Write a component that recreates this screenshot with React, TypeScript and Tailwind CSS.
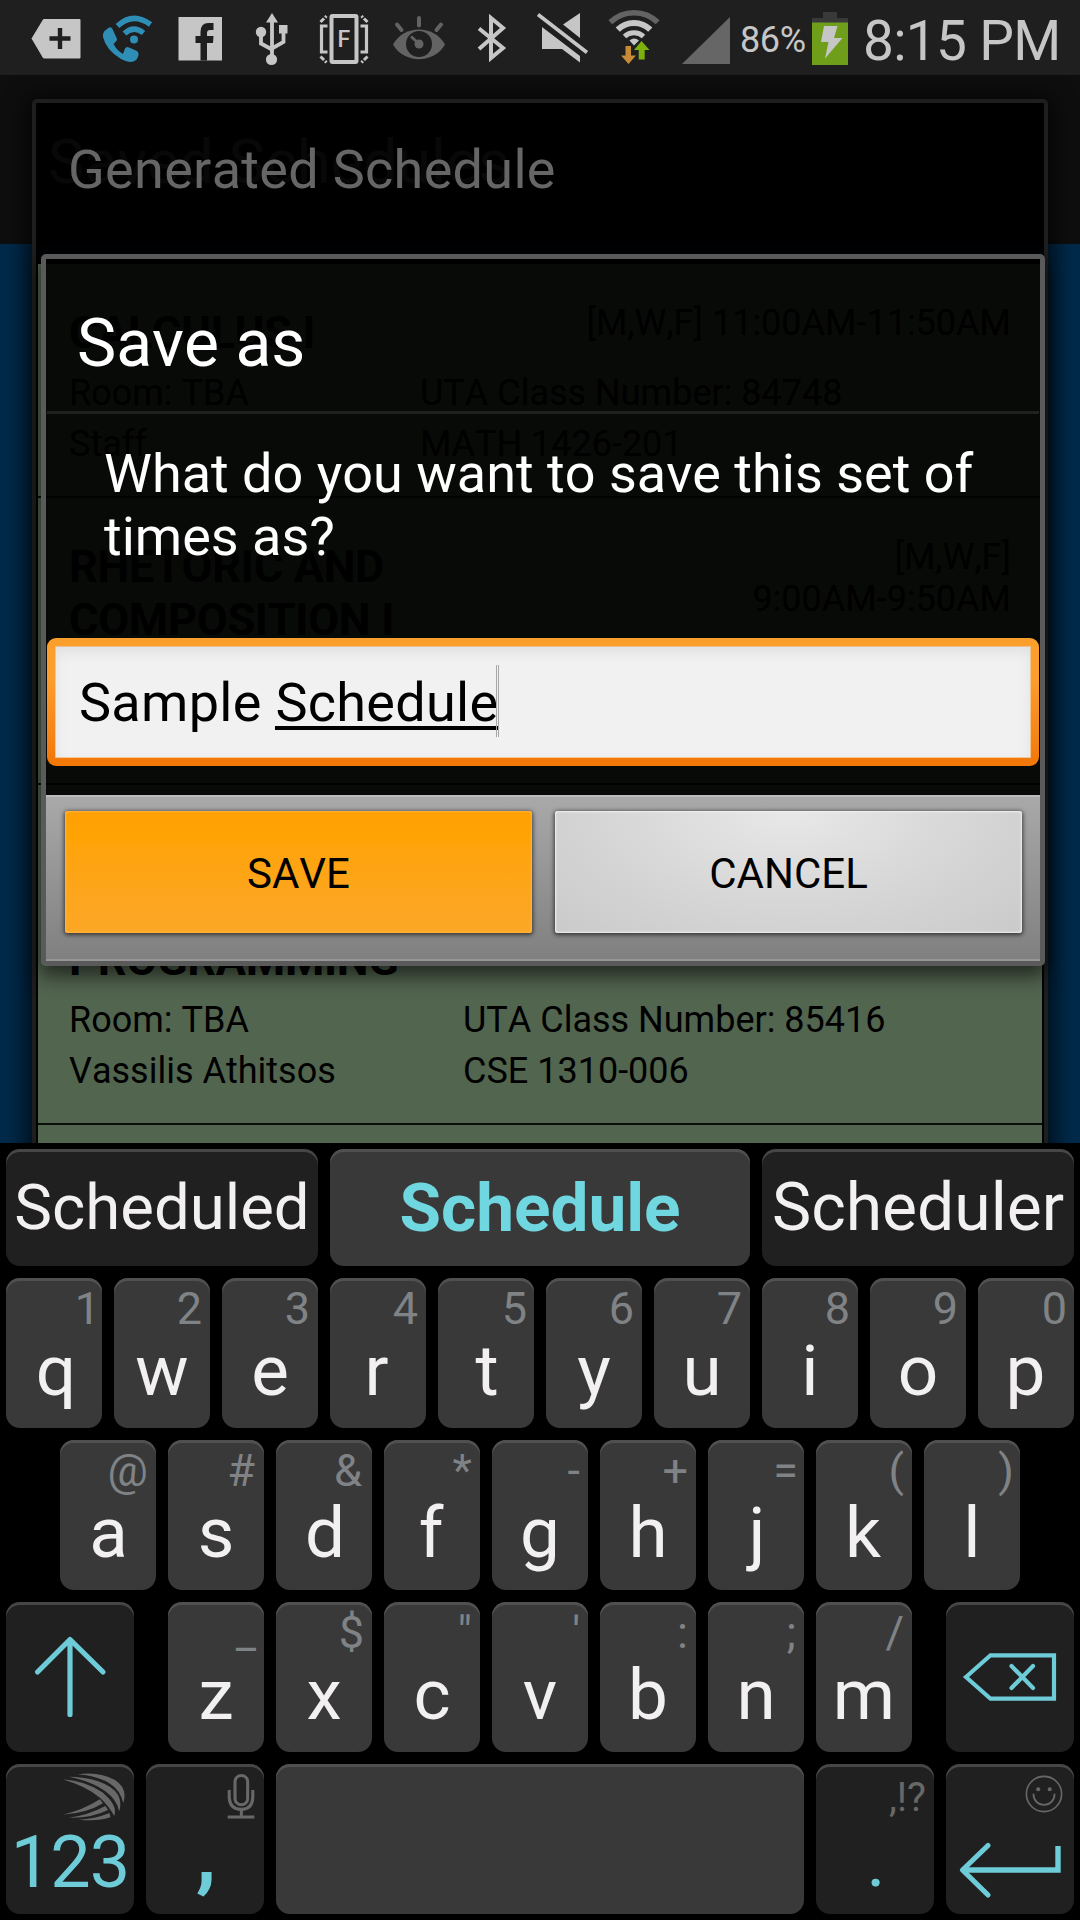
import React from "react";

const CYAN = "#6dccd8";
const LIGHT = "#c6c6c6";

function Slot({ x, w, children }: { x: number; w: number; children?: React.ReactNode }) {
  return (
    <svg width={w} height={75} viewBox={`${x} 0 ${w} 75`} className="shrink-0" fill="none">
      {children}
    </svg>
  );
}

function StatusBar() {
  return (
    <div className="flex h-[75px] shrink-0 bg-[#1f1f1f] text-[#c6c6c6]">
      <Slot x={0} w={92}>
        <path d="M32 38.5 43.5 19.5H80V58H43.5Z" fill={LIGHT} stroke={LIGHT} strokeLinejoin="round" />
        <path d="M49.5 38.5H70.5M60 28V49" stroke="#1f1f1f" strokeWidth="4.4" />
      </Slot>
      <Slot x={92} w={73}>
        <path d="M104.500 31 109 27.500Q111.500 26.500 112.500 29L117 39Q117 41 115.500 42L113.500 44Q116.500 50 123 54L125 48.500Q126.500 46 129 47.500L137 51Q139 52.500 138.500 55Q137.500 60 133.500 61.500Q129 63 121 59Q106 50 103 37Q102.700 33 104.500 31Z" fill="#2f8eb6" />
        <circle cx="134" cy="39.500" r="4" fill="#2f8eb6" />
        <path d="M124.500 33.500Q133.500 25 143.500 33M117.500 26Q133 11.500 150.500 24.500" stroke="#2f8eb6" strokeWidth="5.400" />
      </Slot>
      <Slot x={165} w={73}>
        <path d="M178.500 17H222V60.500H178.500Z" fill={LIGHT} />
        <path d="M200.500 60.500V43H195.500V36H200.500V32Q200.500 23 208.500 23H213.500V30H210Q207 30 207 33V36H213.500L213 43H207V60.500Z" fill="#1f1f1f" />
      </Slot>
      <Slot x={238} w={69}>
        <path d="M272 13 278 22.500H266Z" fill={LIGHT} />
        <path d="M272 20V58M261 34V43.500L272 49.500M283.500 30V42L272 48.500" stroke={LIGHT} strokeWidth="3.800" />
        <circle cx="271.500" cy="59.500" r="5.600" fill={LIGHT} />
        <circle cx="261" cy="32" r="5.200" fill={LIGHT} />
        <rect x="279" y="25" width="8.500" height="8.500" fill={LIGHT} />
      </Slot>
      <Slot x={307} w={75}>
        <rect x="331.500" y="16" width="25" height="46" rx="1" stroke={LIGHT} strokeWidth="4" />
        <path d="M327.500 26H321.500V52H327.500M360.500 26H366.500V52H360.500" stroke={LIGHT} strokeWidth="3.200" />
        <path d="M320.500 22 326.500 16M320.500 56.500 326.500 62.500M367.500 22 361.500 16M367.500 56.500 361.500 62.500" stroke={LIGHT} strokeWidth="3" strokeDasharray="5 1.500" />
        <text x="337.500" y="47" fontFamily="Roboto" fontSize="23" fontWeight="500" fill={LIGHT}>F</text>
      </Slot>
      <Slot x={382} w={78}>
        <path d="M393 44.500C404 24.500 434 24.500 445 44.500C434 64 404 64 393 44.500Z" fill="#636363" />
        <circle cx="419" cy="44" r="13" fill="#1f1f1f" />
        <circle cx="419" cy="44" r="4.500" fill="#636363" />
        <path d="M411 36.500 416.500 41.500" stroke="#636363" strokeWidth="3" />
        <path d="M419 18V25.500M397 24.500 401.500 30M441 24.500 436.500 30" stroke="#636363" strokeWidth="4" strokeLinecap="round" />
      </Slot>
      <Slot x={460} w={70}>
        <path d="M479 28.500 503 48 491 58V18L503 28 479 49" stroke={LIGHT} strokeWidth="4" />
      </Slot>
      <Slot x={530} w={70}>
        <path d="M542 27 580 56V62.500L562 49H542Z" fill={LIGHT} />
        <path d="M563 24.500 580 13V38Z" fill={LIGHT} />
        <path d="M538 14.500 587 52.500" stroke={LIGHT} strokeWidth="3.600" />
      </Slot>
      <Slot x={600} w={70}>
        <path d="M610.300 22.300A34 34 0 0 1 657.700 22.300" stroke="#636363" strokeWidth="5.500" />
        <path d="M617.700 29.700A23 23 0 0 1 650.300 29.700" stroke={LIGHT} strokeWidth="6" />
        <path d="M624.500 36.500A14 14 0 0 1 643.500 36.500" stroke={LIGHT} strokeWidth="5" />
        <path d="M629.500 40.500Q634 36.500 639 40.500L634 45.500Z" fill={LIGHT} />
        <path d="M625.500 46H631V55.500H636L628.500 64 621 55.500H625.500Z" fill="#c78b38" />
        <path d="M641.500 41 649.500 50H644.700V59.500H638.700V50H634Z" fill="#7db00e" />
      </Slot>
      <Slot x={670} w={70}>
        <path d="M682 64H730V17Z" fill="#666" />
      </Slot>
      <div className="w-[70px] whitespace-nowrap pt-[18px] text-[36px] leading-[44px] tracking-[-0.4px]">86%</div>
      <Slot x={810} w={52}>
        <path d="M823 12H837V18H848V23H812V18H823Z" fill="#393939" />
        <path d="M812 22.500H848V65H812Z" fill="#6f9f1a" />
        <path d="M824 26H837.500L834 38H842.500L825 58.500 828.500 42H821Z" fill={LIGHT} />
      </Slot>
      <div className="whitespace-nowrap pl-px pt-[9px] text-[55px] leading-[64px] tracking-[-0.7px]">8:15 PM</div>
    </div>
  );
}

function CourseDetails({ rows, col }: { rows: [string, string][]; col: string }) {
  return (
    <div className="mt-[9px] text-[36px] leading-[51px]">
      {rows.map(([a, b]) => (
        <div key={a} className="flex whitespace-nowrap">
          <span className={`shrink-0 ${col}`}>{a}</span>
          <span>{b}</span>
        </div>
      ))}
    </div>
  );
}

function ScheduleDialog() {
  return (
    <div className="absolute left-[32px] top-[24px] h-[1100px] w-[1016px] rounded-[5px] border-4 border-[#1e1e1e] bg-black/95 shadow-[0_4px_22px_6px_rgba(0,0,0,0.7)]">
      <h1 className="h-[161px] pl-[32px] pt-[35px] text-[54px] leading-[64px] tracking-[0.3px] text-[#666]">Generated Schedule</h1>
      <div className="mx-0.5 bg-[#52654f] text-black">
        <div className="h-[234px] border-b-2 border-[#0a0f0a] pl-[31px] pr-[31px] pt-[38px]">
          <div className="flex justify-between">
            <div className="mt-1 text-[45px] font-bold leading-[53px] tracking-[-0.3px]">CALCULUS I</div>
            <div className="text-right text-[36px] leading-[42px]">[M,W,F] 11:00AM-11:50AM</div>
          </div>
          <CourseDetails col="w-[351px]" rows={[["Room: TBA", "UTA Class Number: 84748"], ["Staff", "MATH 1426-201"]]} />
        </div>
        <div className="h-[287px] border-b-2 border-[#0a0f0a] pl-[31px] pr-[31px] pt-[38px]">
          <div className="flex justify-between">
            <div className="mt-1 w-[360px] text-[45px] font-bold leading-[53px] tracking-[-0.3px]">RHETORIC AND COMPOSITION I</div>
            <div className="text-right text-[36px] leading-[42px]">
              [M,W,F]
              <br />
              9:00AM-9:50AM
            </div>
          </div>
        </div>
        <div className="h-[340px] border-b-2 border-[#0a0f0a] pl-[31px] pr-[31px] pt-[42px]">
          <div className="flex h-[159px] items-end text-[45px] font-bold leading-[53px] tracking-[-0.3px]">PROGRAMMING</div>
          <CourseDetails col="w-[394px]" rows={[["Room: TBA", "UTA Class Number: 85416"], ["Vassilis Athitsos", "CSE 1310-006"]]} />
        </div>
        <div className="h-[70px]" />
      </div>
    </div>
  );
}

function SaveDialog() {
  return (
    <div className="absolute left-[41px] top-[179px] flex h-[712px] w-[1004px] flex-col rounded-[5px] border-[5px] border-[#5a5a5a] bg-black/90 text-white shadow-[0_8px_20px_2px_rgba(0,0,0,0.6)]">
      <h2 className="mx-px h-[155px] border-b-[3px] border-[#1f211e] pl-[30px] pt-[46px] text-[66px] leading-[78px]">Save as</h2>
      <p className="h-[224px] pl-[58px] pt-[28px] text-[54px] leading-[63px]">
        What do you want to save this set of
        <br />
        times as?
      </p>
      <div className="mx-px h-[128px] rounded-[9px] bg-linear-to-b from-[#fc9e2c] from-30% to-[#f27908] to-95% p-2">
        <div className="flex h-[112px] items-start bg-[#f1f1f1] pl-[24px] pt-[25px] text-[54px] leading-[64px] tracking-[0.3px] whitespace-pre text-black shadow-[inset_0_6px_14px_rgba(0,0,0,0.07),inset_0_0_0_1px_rgba(250,190,120,0.7)]">
          <span>Sample </span>
          <span className="h-[59px] border-b-4 border-black leading-[64px]">Schedule</span>
          <span className="-ml-[2px] -mt-[6px] h-[72px] w-[3px] border-x border-[#a8a8a8]" />
        </div>
      </div>
      <div className="mt-[29px] flex h-[166px] gap-[23px] border-b-2 border-t-2 border-b-[#959595] border-t-[#bcbcbc] bg-linear-to-b from-[#a9a9a9] to-[#808080] pl-[19px] pt-[14px] text-[42px] text-black">
        <button className="h-[122px] w-[467px] rounded-[3px] bg-linear-to-b from-[#ff9f04] via-[#ffa303] via-20% to-[#fca726] pt-[3px] leading-[119px] shadow-[0_1px_4px_1px_rgba(0,0,0,0.6),inset_0_0_2px_1px_#ffb53c]">
          SAVE
        </button>
        <button className="h-[122px] w-[467px] rounded-[3px] bg-[radial-gradient(ellipse_at_50%_0%,#e8e8e8,#d6d6d6_55%,#cacaca)] pt-[3px] leading-[119px] shadow-[0_1px_4px_1px_rgba(0,0,0,0.6),inset_0_0_2px_1px_#f0f0f0]">
          CANCEL
        </button>
      </div>
    </div>
  );
}

const KEY = "flex h-[150px] shrink-0 flex-col rounded-[14px] bg-[#393939] shadow-[inset_0_3px_0_#505050]";
const FN_KEY = "flex h-[150px] shrink-0 flex-col rounded-[14px] bg-[#202020] shadow-[inset_0_3px_0_#464646]";

const LETTER_PAD: Record<string, string> = {
  q: "pl-[4px]",
  r: "pr-[3px]",
  t: "pl-[2px]",
  d: "pl-[2px]",
  a: "pl-[1px]",
  f: "pr-[2px]",
  k: "pr-[2px]",
  p: "pr-[1px]",
  j: "pl-[2px]",
};
const HINT_PAD: Record<string, string> = {
  "1": "pr-[2px]",
  "5": "pr-[7px]",
  "0": "pr-[7px]",
  "=": "pr-[6px]",
  ")": "pr-[6px]",
  "&": "pr-[10px]",
  "#": "pr-[9px]",
};

function Key({ c, hint }: { c: string; hint: string }) {
  return (
    <div className={`${KEY} w-24`}>
      <span className={`text-right text-[45px] leading-[61px] text-[#808386] ${HINT_PAD[hint] ?? "pr-[8px]"}`}>{hint}</span>
      <span className={`text-center text-[71px] leading-[63px] text-[#f2f0f1] ${LETTER_PAD[c] ?? ""}`}>{c}</span>
    </div>
  );
}

function KeyRow({ keys }: { keys: [string, string][] }) {
  return (
    <div className="flex gap-3">
      {keys.map(([c, h]) => (
        <Key key={c} c={c} hint={h} />
      ))}
    </div>
  );
}

const row1: [string, string][] = [["q", "1"], ["w", "2"], ["e", "3"], ["r", "4"], ["t", "5"], ["y", "6"], ["u", "7"], ["i", "8"], ["o", "9"], ["p", "0"]];
const row2: [string, string][] = [["a", "@"], ["s", "#"], ["d", "&"], ["f", "*"], ["g", "-"], ["h", "+"], ["j", "="], ["k", "("], ["l", ")"]];
const row3: [string, string][] = [["z", "_"], ["x", "$"], ["c", '"'], ["v", "'"], ["b", ":"], ["n", ";"], ["m", "/"]];

function Keyboard() {
  return (
    <div className="flex h-[777px] shrink-0 flex-col gap-3 bg-black px-1.5 pt-1.5">
      <div className="flex gap-3 text-center text-[66px] leading-[117px] text-[#f2f0f1]">
        <div className="h-[117px] w-[312px] rounded-[14px] bg-[#202020] text-[63.5px] shadow-[inset_0_3px_0_#464646]">Scheduled</div>
        <div className="h-[117px] w-[420px] rounded-[14px] bg-[#393939] text-[67.5px] font-bold text-[#70d6df] shadow-[inset_0_3px_0_#505050]">Schedule</div>
        <div className="h-[117px] w-[312px] rounded-[14px] bg-[#202020] shadow-[inset_0_3px_0_#464646]">Scheduler</div>
      </div>
      <KeyRow keys={row1} />
      <div className="pl-[54px]">
        <KeyRow keys={row2} />
      </div>
      <div className="flex justify-between">
        <div className={`${FN_KEY} w-32`}>
          <svg width="128" height="150" viewBox="6 1602 128 150" fill="none" stroke={CYAN} strokeWidth="5.200" strokeLinecap="round" strokeLinejoin="round">
            <path d="M37.500 1672 70 1639.500 103 1672M70 1640V1714.500" />
          </svg>
        </div>
        <KeyRow keys={row3} />
        <div className={`${FN_KEY} w-32`}>
          <svg width="128" height="150" viewBox="946 1602 128 150" fill="none" stroke={CYAN} strokeWidth="4.200" strokeLinecap="round">
            <path d="M966 1677 990.500 1655.300H1054V1698.700H990.500Z" />
            <path d="M1011.500 1666 1033 1688M1033 1666 1011.500 1688" />
          </svg>
        </div>
      </div>
      <div className="flex gap-3">
        <div className={`${FN_KEY} w-32`}>
          <svg width="64" height="50" viewBox="180 545 186 150" preserveAspectRatio="none" className="ml-[56px] mt-[8px] shrink-0" fill="#686868">
            <path d="M225 552Q290 542 335 570Q372 595 358 638Q350 600 320 580Q285 557 225 552Z" />
            <path d="M200 559Q275 560 320 590Q360 618 346 663Q340 628 305 602Q265 573 200 559Z" />
            <path d="M182 567Q250 572 297 606Q343 645 332 677Q315 645 290 622Q250 588 182 567Z" />
            <path d="M182 673Q240 660 290 627L299 639Q250 670 182 673Z" />
            <path d="M200 682Q255 675 306 647L314 659Q265 684 200 682Z" />
            <path d="M228 688Q275 686 318 668L321 681Q285 694 228 688Z" />
          </svg>
          <span className="mt-[9px] text-center text-[72px] leading-[63px] tracking-[-1px] text-[#6dccd8]">123</span>
        </div>
        <div className={`${FN_KEY} w-[118px]`}>
          <svg width="28" height="47" viewBox="660 547 82 141" preserveAspectRatio="none" className="ml-[81px] mt-[9px] shrink-0" fill="none" stroke="#686868" strokeWidth="9">
            <rect x="683.500" y="554.500" width="37" height="88" rx="18.500" />
            <path d="M666.500 598V620Q668 656 702 656Q734 656 735.500 620V598M702 656V678M662 679H740" />
          </svg>
          <span className="mt-[2px] pl-[2px] text-center text-[84px] font-bold leading-[63px] text-[#6dccd8]">,</span>
        </div>
        <div className={`${KEY} w-[528px]`} />
        <div className={`${FN_KEY} w-[118px]`}>
          <span className="pr-[8px] pt-px text-right text-[40px] leading-[66px] text-[#686868]">,!?</span>
          <span className="-mt-px pl-[2px] text-center text-[72px] leading-[63px] text-[#6dccd8]">.</span>
        </div>
        <div className={`${FN_KEY} w-32`}>
          <svg width="128" height="150" viewBox="946 1764 128 150" fill="none" strokeLinecap="round">
            <circle cx="1044" cy="1794" r="17.600" stroke="#686868" strokeWidth="1.600" />
            <circle cx="1038.200" cy="1789.200" r="2" fill="#686868" />
            <circle cx="1049.700" cy="1789.200" r="2" fill="#686868" />
            <path d="M1033.500 1794.500A10.500 10.300 0 0 0 1054.500 1794.500" stroke="#686868" strokeWidth="1.800" />
            <path d="M988 1845.500 962.500 1870 988 1895" stroke={CYAN} strokeWidth="5.200" strokeLinejoin="round" />
            <path d="M962.500 1870H1058V1846" stroke={CYAN} strokeWidth="5.400" strokeLinecap="butt" />
          </svg>
        </div>
      </div>
    </div>
  );
}

export default function App() {
  return (
    <div className="flex h-[1920px] w-[1080px] flex-col overflow-hidden bg-black font-[Roboto,sans-serif] [font-kerning:none]">
      <StatusBar />
      <main className="relative h-[1068px] shrink-0 overflow-hidden bg-[#002a4a]">
        <div className="h-[169px] bg-[#0e0e0e] pl-[48px] pt-[53px] text-[61px] leading-[68px] text-[#999]">Saved Schedules</div>
        <ScheduleDialog />
        <SaveDialog />
      </main>
      <Keyboard />
    </div>
  );
}
